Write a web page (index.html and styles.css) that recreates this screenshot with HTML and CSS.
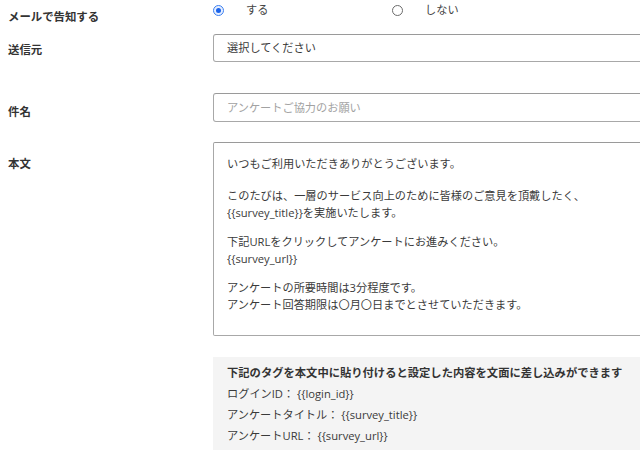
FILE: index.html
```html
<!DOCTYPE html>
<html lang="ja">
<head>
<meta charset="utf-8">
<link rel="stylesheet" href="styles.css">
</head>
<body>
<div class="form">
  <div class="row row-notify">
    <div class="label">メールで告知する</div>
    <div class="radios">
      <span class="radio-item"><span class="radio checked"></span><span class="radio-text">する</span></span>
      <span class="radio-item"><span class="radio"></span><span class="radio-text">しない</span></span>
    </div>
  </div>
  <div class="row row-from">
    <div class="label">送信元</div>
    <div class="field">選択してください</div>
  </div>
  <div class="row row-subject">
    <div class="label">件名</div>
    <div class="field placeholder">アンケートご協力のお願い</div>
  </div>
  <div class="row row-body">
    <div class="label">本文</div>
    <div class="textarea">
      <p class="para first">いつもご利用いただきありがとうございます。</p>
      <p class="para">このたびは、一層のサービス向上のために皆様のご意見を頂戴したく、<br>{{survey_title}}を実施いたします。</p>
      <p class="para">下記URLをクリックしてアンケートにお進みください。<br>{{survey_url}}</p>
      <p class="para">アンケートの所要時間は3分程度です。<br>アンケート回答期限は<span class="cjk">〇</span>月<span class="cjk">〇</span>日までとさせていただきます。</p>
    </div>
  </div>
  <div class="row row-tags">
    <div class="label"></div>
    <div class="tags">
      <div class="tags-title">下記のタグを本文中に貼り付けると設定した内容を文面に差し込みができます</div>
      <div class="tag">ログインID： {{login_id}}</div>
      <div class="tag">アンケートタイトル： {{survey_title}}</div>
      <div class="tag">アンケートURL： {{survey_url}}</div>
      <div class="tag">オープンアンケートURL： {{open_survey_url}}</div>
    </div>
  </div>
</div>
</body>
</html>
```

FILE: styles.css
```css
html, body {
  margin: 0;
  padding: 0;
  background: #fff;
  overflow: hidden;
}
body {
  width: 640px;
  height: 450px;
  font-family: "Open Sans", "Noto Sans CJK JP", sans-serif;
  color: #383838;
  font-size: 11.2px;
}
.cjk {
  font-family: "Noto Sans CJK JP", sans-serif;
}
.form {
  padding-left: 8px;
  width: 760px;
}
.row {
  display: flex;
  align-items: flex-start;
}
.label {
  flex: 0 0 205px;
  font-weight: bold;
  font-size: 11.4px;
  line-height: 16px;
  color: #333;
}
.row-notify .label { margin-top: 9px; }
.radios {
  display: flex;
  margin-top: 2px;
  line-height: 16px;
}
.radio-item {
  display: flex;
  align-items: center;
  width: 179px;
}
.radio {
  box-sizing: border-box;
  width: 11px;
  height: 11px;
  border-radius: 50%;
  border: 1px solid #6b6b6b;
  background: #fff;
  margin-right: 22px;
  position: relative;
}
.radio.checked {
  border-color: #3c7ff0;
  background: #e6efff;
}
.radio.checked::after {
  content: "";
  position: absolute;
  left: 2px;
  top: 2px;
  width: 5px;
  height: 5px;
  border-radius: 50%;
  background: #1b63ea;
}
.radio-text { color: #444; }

.row-from { margin-top: 9px; }
.row-from .label { margin-top: 8px; }
.field {
  box-sizing: border-box;
  width: 520px;
  height: 28px;
  border: 1px solid #a8a8a8;
  border-top-color: #9a9a9a;
  border-radius: 3px;
  padding: 0 13px;
  line-height: 26px;
  color: #3a3a3a;
}
.field.placeholder { color: #a2a2a2; }
.row-subject { margin-top: 31px; }
.row-subject .label { margin-top: 11px; }
.row-subject .field { height: 29px; line-height: 27px; }

.row-body { margin-top: 20px; }
.row-body .label { margin-top: 14px; }
.textarea {
  box-sizing: border-box;
  width: 520px;
  height: 194px;
  border: 1px solid #a8a8a8;
  border-top-color: #9a9a9a;
  border-radius: 2px;
  padding: 12px 13px 0;
  line-height: 17px;
  color: #3a3a3a;
}
.para { margin: 0 0 12px; }
.para.first { margin-bottom: 15px; }

.row-tags { margin-top: 21px; }
.tags {
  width: 520px;
  background: #f4f4f4;
  padding: 5px 14px 0;
  line-height: 21px;
  height: 120px;
  color: #3a3a3a;
}
.tags-title {
  font-weight: bold;
  color: #333;
  font-size: 11.3px;
}
```
